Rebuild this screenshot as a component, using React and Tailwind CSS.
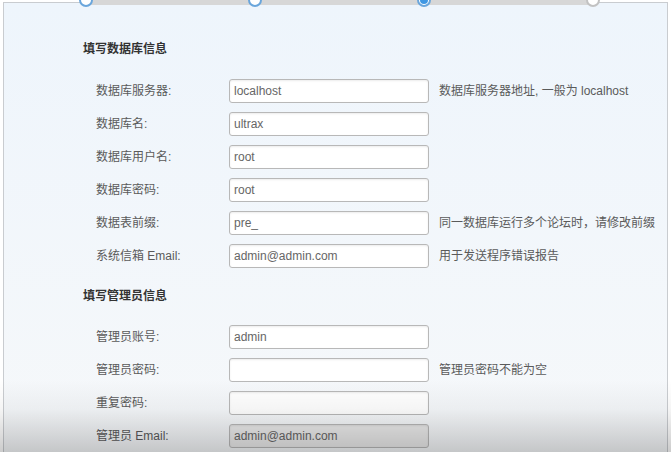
import React from 'react';

const dbRows = [
  { label: '数据库服务器:', value: 'localhost', hint: '数据库服务器地址, 一般为 localhost' },
  { label: '数据库名:', value: 'ultrax' },
  { label: '数据库用户名:', value: 'root' },
  { label: '数据库密码:', value: 'root' },
  { label: '数据表前缀:', value: 'pre_', hint: '同一数据库运行多个论坛时，请修改前缀' },
  { label: '系统信箱 Email:', value: 'admin@admin.com', hint: '用于发送程序错误报告' },
];

const adminRows = [
  { label: '管理员账号:', value: 'admin' },
  { label: '管理员密码:', value: '', hint: '管理员密码不能为空' },
  { label: '重复密码:', value: '' },
  { label: '管理员 Email:', value: 'admin@admin.com', disabled: true },
];

function Row({ label, value, hint, disabled }) {
  return (
    <div className="flex items-center h-[24px]">
      <div className="w-[146px] pl-[13px] text-[12px] text-[#5a5a5a]">{label}</div>
      <div
        className={
          disabled
            ? 'w-[200px] h-[24px] rounded-[3px] border border-[#b8b8b8] bg-[#ebebeb] px-[4px] flex items-center text-[12px] text-[#666] shadow-[inset_0_1px_2px_rgba(0,0,0,0.08)]'
            : 'w-[200px] h-[24px] rounded-[3px] border border-[#b8b8b8] bg-white px-[4px] flex items-center text-[12px] text-[#666] shadow-[inset_0_1px_2px_rgba(0,0,0,0.08)]'
        }
      >
        {value}
      </div>
      {hint && <div className="ml-[10px] text-[12px] text-[#5a5a5a]">{hint}</div>}
    </div>
  );
}

function Step({ active, done }) {
  return (
    <div
      className={
        done
          ? 'w-[14px] h-[14px] rounded-full bg-white border-[2px] border-[#c2c2c2]'
          : 'w-[14px] h-[14px] rounded-full bg-white border-[2px] border-[#6aa6dc] flex items-center justify-center'
      }
    >
      {active && <div className="w-[8px] h-[8px] rounded-full bg-[#3f97e3]" />}
    </div>
  );
}

export default function App() {
  return (
    <div
      className="relative w-[671px] h-[452px] overflow-hidden bg-white"
      style={{ fontFamily: '"Liberation Sans", "Noto Sans CJK SC", sans-serif' }}
    >
      {/* 面板 */}
      <div className="mt-[2px] ml-[3px] w-[665px] h-[460px] border border-[#c9ccd0] bg-gradient-to-b from-[#eef5fc] to-[#f6f8fa] pl-[79px] pt-[39px]">
        <div className="text-[12px] font-bold text-[#333] leading-[14px]">填写数据库信息</div>
        <div className="mt-[23px] flex flex-col gap-[9px]">
          {dbRows.map((r) => (
            <Row key={r.label} {...r} />
          ))}
        </div>
        <div className="mt-[21px] text-[12px] font-bold text-[#333] leading-[14px]">填写管理员信息</div>
        <div className="mt-[22px] flex flex-col gap-[9px]">
          {adminRows.map((r) => (
            <Row key={r.label} {...r} />
          ))}
        </div>
      </div>

      {/* 步骤条 */}
      <div className="absolute left-[86px] top-0 w-[507px] h-[5px] bg-[#d7d7d7]" />
      <div className="absolute left-[79px] top-[-7px] flex gap-[155px]">
        <Step />
        <Step />
        <Step active />
        <Step done />
      </div>

      {/* 底部阴影 */}
      <div className="absolute left-0 bottom-0 w-full h-[72px] bg-gradient-to-b from-transparent via-[rgba(0,0,0,0.04)] via-40% to-[rgba(0,0,0,0.2)] pointer-events-none" />
    </div>
  );
}
